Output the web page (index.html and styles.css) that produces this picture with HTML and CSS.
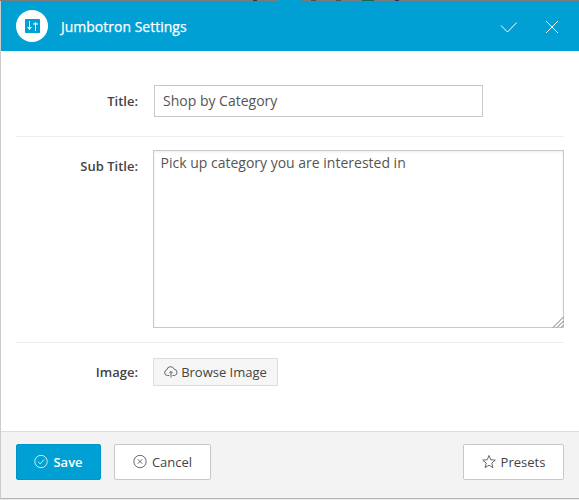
FILE: index.html
```html
<!DOCTYPE html>
<html lang="en">
<head>
<meta charset="utf-8">
<title>Jumbotron Settings</title>
<link rel="stylesheet" href="styles.css">
</head>
<body>
<div class="backdrop"></div>
<main class="dialog">
  <header class="header">
    <span class="badge">
      <svg width="15" height="14" viewBox="0 0 15 14"><rect width="15" height="14" rx=".8" fill="#00a0d4"/><path d="M4.500 2v9M2.500 8.500h4M10.500 4v8M8 5h5" stroke="#fff" fill="none"/><path d="M3 9h3l-1.500 2zM9 4.500h3L10.500 3z" fill="#fff"/></svg>
    </span>
    <h1 class="title">Jumbotron Settings</h1>
    <div class="actions">
      <svg width="18" height="13" viewBox="0 0 18 13"><path d="M1 4.500L7.500 11 16.700 1.500"/></svg>
      <svg width="14" height="14" viewBox="0 0 14 14"><path d="M1 1l12 12M13 1L1 13"/></svg>
    </div>
  </header>
  <form class="form">
    <div class="row row-title">
      <label class="label" for="title">Title:</label>
      <input class="input" id="title" type="text" value="Shop by Category">
    </div>
    <div class="row row-subtitle">
      <label class="label" for="subtitle">Sub Title:</label>
      <div class="area-wrap">
        <textarea class="area" id="subtitle" spellcheck="false">Pick up category you are interested in</textarea>
        <svg class="grip" width="12" height="12" viewBox="0 0 12 12"><path d="M1 11.500L11.500 1M5 11.500L11.500 5M9 11.500L11.500 9"/></svg>
      </div>
    </div>
    <div class="row row-image">
      <span class="label">Image:</span>
      <button class="browse" type="button">
        <svg class="icon" width="14" height="12" viewBox="0 0 14 12"><path d="M5.300 9.500H3.500A2.800 2.800 0 0 1 2.700 4 3.900 3.900 0 0 1 10.200 3.200 3.200 3.200 0 0 1 10.500 9.500H8.500M7 11.500V5.500M5.200 7.200L7 5.400l1.800 1.800"/></svg>Browse Image
      </button>
    </div>
  </form>
  <footer class="footer">
    <button class="btn save" type="button">
      <svg class="icon" width="14" height="14" viewBox="0 0 14 14"><circle cx="7" cy="6.500" r="6.200"/><path d="M3.900 6.700l2.300 2.200 4-4.500"/></svg>Save
    </button>
    <button class="btn cancel" type="button">
      <svg class="icon" width="14" height="14" viewBox="0 0 14 14"><circle cx="7" cy="6.500" r="6.200"/><path d="M4.800 4.300l4.400 4.400M9.200 4.300L4.800 8.700"/></svg>Cancel
    </button>
    <button class="btn presets" type="button">
      <svg class="icon" width="14" height="14" viewBox="0 0 14 14"><path d="M7 .5l1.800 4.300 4.500.3-3.500 3 1.100 4.500L7 10.200 3.100 12.600l1.100-4.500-3.500-3 4.500-.3z"/></svg>Presets
    </button>
  </footer>
</main>
</body>
</html>
```
FILE: styles.css
```css
* {
  box-sizing: border-box;
}

body {
  margin: 0;
  height: 500px;
  overflow: hidden;
  background: #e9e9e9;
  font-family: "Open Sans", sans-serif;
  font-size: 13px;
  color: #444;
}

/* Sliver of the page behind the dialog */
.backdrop {
  height: 1px;
  background: linear-gradient(90deg,
    #7b7b7b 253px, #263a5c 253px 257px, #7b7b7b 257px 278px,
    #00a0d4 278px 302px, #7b7b7b 302px 311px, #505050 311px 316px,
    #7b7b7b 316px 336px, #505050 336px 341px, #7b7b7b 341px 362px,
    #176660 362px 374px, #7b7b7b 374px 395px, #263a5c 395px 399px,
    #7b7b7b 399px);
}

.dialog {
  display: flex;
  flex-direction: column;
  height: 498px;
  border-left: 1px solid #ccc;
  border-bottom: 1px solid #b5b5b5;
  background: #fff;
}

.header {
  display: flex;
  align-items: center;
  height: 50px;
  padding: 0 20px 0 15px;
  background: #00a0d4;
  color: #fff;
}

.badge {
  display: flex;
  align-items: center;
  justify-content: center;
  width: 32px;
  height: 32px;
  border-radius: 50%;
  background: #fff;
}

.title {
  margin: 1px 0 0 13px;
  font-size: 14px;
  font-weight: 400;
  -webkit-text-stroke: .25px #fff;
}

.actions {
  display: flex;
  align-items: center;
  gap: 27px;
  margin: 2px 0 0 auto;
  fill: none;
  stroke: #fff;
  stroke-width: 1;
}

.form {
  flex: 1;
  padding: 0 15px;
}

.row {
  display: flex;
  align-items: flex-start;
}

.row-title {
  height: 86px;
  padding-top: 34px;
  border-bottom: 1px solid #eee;
}

.row-subtitle {
  height: 206px;
  padding-top: 13px;
  border-bottom: 1px solid #eee;
}

.row-image {
  padding-top: 15px;
}

.label {
  width: 122px;
  margin-right: 15px;
  padding-top: 7px;
  line-height: 18px;
  font-weight: 600;
  text-align: right;
}

.row-image .label {
  padding-top: 5px;
}

.input,
.area {
  border: 1px solid #c8c8c8;
  border-radius: 0;
  background: #fff;
  font: 14px/19px "Open Sans", sans-serif;
  color: #555;
  outline: 0;
}

.input {
  width: 329px;
  height: 32px;
  margin-left: 1px;
  padding: 0 8px 2px;
}

.area-wrap {
  position: relative;
  width: 411px;
  height: 178px;
}

.area {
  display: block;
  width: 100%;
  height: 100%;
  padding: 2px 6.500px;
  resize: none;
  box-shadow: inset 0 1px 3px rgba(0, 0, 0, .07);
}

.grip {
  position: absolute;
  right: 0;
  bottom: 0;
  fill: none;
  stroke: #777;
}

.icon {
  flex: none;
  fill: none;
  stroke: currentColor;
  stroke-width: .8;
}

.browse,
.btn {
  display: flex;
  align-items: center;
  justify-content: center;
  padding: 0;
  font: 13px/18px "Open Sans", sans-serif;
  color: #444;
}

.browse {
  gap: 3px;
  width: 125px;
  height: 28px;
  border: 1px solid #ddd;
  background: #f6f6f6;
}

.footer {
  display: flex;
  gap: 13px;
  height: 67px;
  padding: 12px 15px 0;
  border-top: 1px solid #ddd;
  background: #f3f3f3;
}

.btn {
  gap: 5px;
  height: 36px;
  border: 1px solid #c8c8c8;
  border-radius: 2px;
  background: #fff;
}

.save {
  width: 85px;
  border-color: #0096c7;
  background: #00a0d4;
  color: #fff;
  font-weight: 600;
}

.cancel {
  width: 97px;
}

.presets {
  width: 101px;
  margin-left: auto;
}
```
